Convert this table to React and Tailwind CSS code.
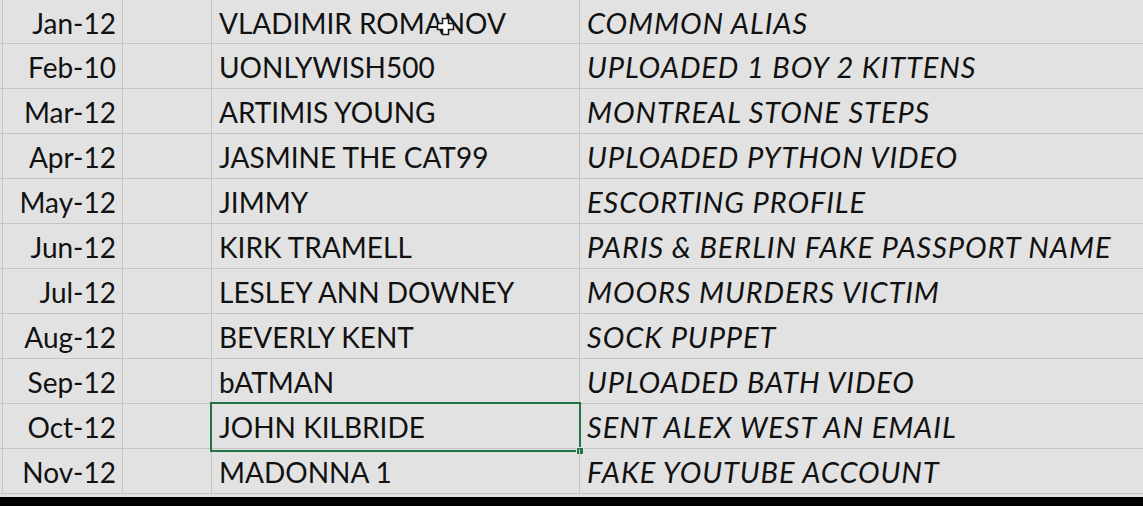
import React from 'react';

const rows = [
  ['Jan-12', 'VLADIMIR ROMANOV', 'COMMON ALIAS'],
  ['Feb-10', 'UONLYWISH500', 'UPLOADED 1 BOY 2 KITTENS'],
  ['Mar-12', 'ARTIMIS YOUNG', 'MONTREAL STONE STEPS'],
  ['Apr-12', 'JASMINE THE CAT99', 'UPLOADED PYTHON VIDEO'],
  ['May-12', 'JIMMY', 'ESCORTING PROFILE'],
  ['Jun-12', 'KIRK TRAMELL', 'PARIS & BERLIN FAKE PASSPORT NAME'],
  ['Jul-12', 'LESLEY ANN DOWNEY', 'MOORS MURDERS VICTIM'],
  ['Aug-12', 'BEVERLY KENT', 'SOCK PUPPET'],
  ['Sep-12', 'bATMAN', 'UPLOADED BATH VIDEO'],
  ['Oct-12', 'JOHN KILBRIDE', 'SENT ALEX WEST AN EMAIL'],
  ['Nov-12', 'MADONNA 1', 'FAKE YOUTUBE ACCOUNT'],
];

const CellCursor = () => (
  <svg width="19" height="19" viewBox="0 0 19 19" className="absolute left-[436px] top-[17px]">
    <path d="M6.5 1.5h6v5h5v6h-5v5h-6v-5h-5v-6h5z" fill="#fff" stroke="#1a1a1a" strokeWidth="1.5" />
  </svg>
);

export default function App() {
  return (
    <div className="relative w-[1143px] h-[506px] overflow-hidden bg-[#e2e2e2] text-[#111] font-['Lato','Liberation_Sans',sans-serif] text-[28px]">
      {rows.map(([date, name, note], i) => {
        const selected = i === 9;
        return (
          <div
            key={date}
            className={`grid grid-cols-[3px_120px_89px_368px_1fr] border-b border-[#c4c4c4] ${i === 0 ? 'h-[44px]' : 'h-[45px]'}`}
          >
            <div className="border-r border-[#c4c4c4]" />
            <div className="border-r border-[#c4c4c4] flex items-center justify-end pr-[6px] pt-[1px]">{date}</div>
            <div className="border-r border-[#c4c4c4]" />
            <div className="relative border-r border-[#c4c4c4] flex items-center pl-[7px] pt-[1px] whitespace-nowrap">
              {name}
              {selected && (
                <>
                  <div className="absolute -left-[2px] -top-[2px] -right-[2px] -bottom-[3px] border-2 border-[#217346]" />
                  <div className="absolute -right-[5px] -bottom-[6px] w-[8px] h-[8px] bg-[#217346] border border-[#e2e2e2]" />
                </>
              )}
            </div>
            <div className="flex items-center pl-[7px] pt-[1px] italic text-[29px] tracking-[0.9px] whitespace-nowrap">{note}</div>
          </div>
        );
      })}
      <div className="h-[3px]" />
      <div className="h-[9px] bg-black" />
      <CellCursor />
    </div>
  );
}
